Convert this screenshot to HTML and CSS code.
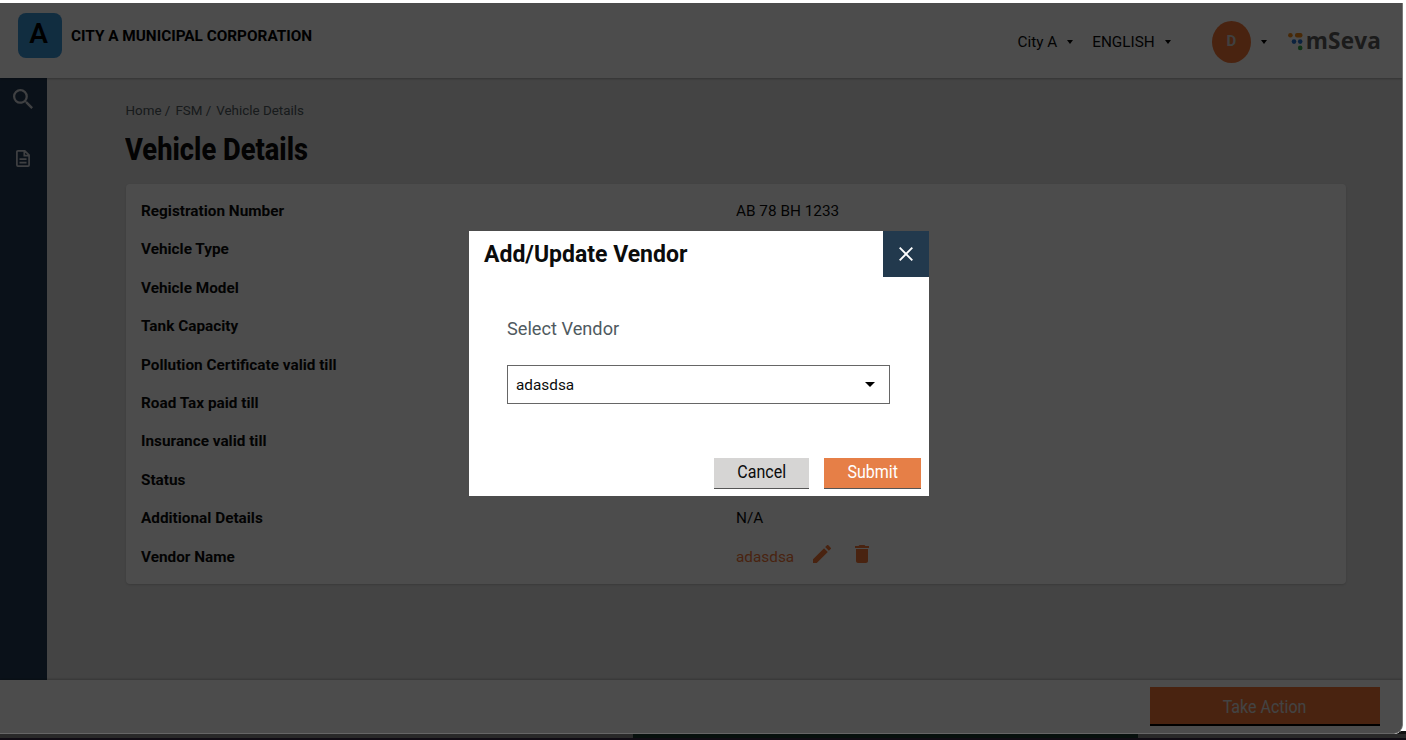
FILE: index.html
```html
<!DOCTYPE html>
<html lang="en">
<head>
<meta charset="utf-8">
<title>Vehicle Details</title>
<link rel="stylesheet" href="styles.css">
</head>
<body>
<div class="window">
  <header class="topbar">
    <div class="brand"><span class="logo">A</span><span class="brand-name">CITY A MUNICIPAL CORPORATION</span></div>
    <div class="tools">
      <span class="city">City A</span><i class="caret"></i>
      <span class="lang">ENGLISH</span><i class="caret"></i>
      <span class="avatar">D</span><i class="caret"></i>
      <svg class="dots" width="15" height="18" viewBox="0 0 15 18"><g fill="#f08a18"><circle cx="2.4" cy="2.3" r="2.3"/><rect x="7" y="0" width="7.500" height="4.600" rx="2"/></g><g fill="#2673d0"><circle cx="6" cy="8.600" r="2.300"/><circle cx="12.200" cy="8.600" r="2.300"/></g><circle cx="12.200" cy="14.900" r="2.300" fill="#35a848"/></svg>
      <span class="mseva">mSeva</span>
    </div>
  </header>
  <div class="body">
    <nav class="sidebar">
      <svg width="20" height="20" viewBox="3 3 17.5 17.5" fill="#fff"><path d="M15.5 14h-.79l-.28-.27A6.47 6.47 0 0 0 16 9.5 6.5 6.5 0 1 0 9.5 16c1.61 0 3.09-.59 4.23-1.57l.27.28v.79l5 4.99L20.49 19l-4.99-5zm-6 0C7.01 14 5 11.99 5 9.5S7.01 5 9.5 5 14 7.01 14 9.5 11.99 14 9.5 14z"/></svg>
      <svg class="doc" width="14" height="17" viewBox="0 0 14 17" fill="none" stroke="#fff" stroke-width="1.700"><path d="M8.800.9H2Q.9.9.9 2V15Q.9 16.100 2 16.100H12Q13.100 16.100 13.100 15V5.200L8.800.9zM8.300 1V5.700H13M3.500 9.200H10.500M3.500 12.600H10.500"/></svg>
    </nav>
    <main class="content">
      <div class="crumbs"><span>Home /</span><span>FSM /</span><span>Vehicle Details</span></div>
      <h1 class="title">Vehicle Details</h1>
      <section class="card">
        <div class="row"><b>Registration Number</b><span>AB 78 BH 1233</span></div>
        <div class="row"><b>Vehicle Type</b></div>
        <div class="row"><b>Vehicle Model</b></div>
        <div class="row"><b>Tank Capacity</b></div>
        <div class="row"><b>Pollution Certificate valid till</b></div>
        <div class="row"><b>Road Tax paid till</b></div>
        <div class="row"><b>Insurance valid till</b></div>
        <div class="row"><b>Status</b></div>
        <div class="row"><b>Additional Details</b><span>N/A</span></div>
        <div class="row"><b>Vendor Name</b><span class="vendor">adasdsa
          <svg class="pencil" width="18" height="18" viewBox="3 3 18 18"><path d="M3 17.250V21h3.750L17.810 9.940l-3.750-3.750L3 17.250zM20.710 7.040a1 1 0 0 0 0-1.410l-2.340-2.340a1 1 0 0 0-1.410 0l-1.830 1.830 3.750 3.750 1.830-1.830z"/></svg>
          <svg class="bin" width="14" height="18" viewBox="5 3 14 18"><path d="M6 19c0 1.100.9 2 2 2h8c1.100 0 2-.9 2-2V7H6v12zM19 4h-3.500l-1-1h-5l-1 1H5v2h14V4z"/></svg></span></div>
      </section>
    </main>
  </div>
  <footer class="actions"><div class="action"><span class="narrow">Take Action</span></div></footer>
  <div class="overlay"></div>
</div>
<div class="edge"><i></i><i></i><i></i></div>
<div class="modal">
  <div class="modal-head"><h2>Add/Update Vendor</h2><span class="close"><svg width="14" height="14" viewBox="0 0 14 14" stroke="#fff" stroke-width="1.900"><path d="M.7.7l12.600 12.600M13.300.7L.7 13.300"/></svg></span></div>
  <div class="modal-body"><label class="label">Select Vendor</label><div class="select"><span>adasdsa</span><i class="caret big"></i></div></div>
  <div class="buttons"><div class="btn cancel"><span class="narrow">Cancel</span></div><div class="btn submit"><span class="narrow">Submit</span></div></div>
</div>
</body>
</html>
```
FILE: styles.css
```css
* { box-sizing: border-box; }
html, body { margin: 0; height: 740px; overflow: hidden; }
body { position: relative; padding-top: 3px; background: #fff; font-family: Roboto, sans-serif; font-size: 15.33px; color: #0b0c0c; }
.window { position: relative; z-index: 1; width: 1403px; height: 731px; display: flex; flex-direction: column; background: #e3e3e3; border-radius: 0 0 9px 0; overflow: hidden; }
.overlay { position: absolute; inset: 0; z-index: 5; background: rgba(0, 0, 0, 0.7); border-right: 1px solid #777; border-bottom: 1px solid #666; border-radius: 0 0 9px 0; }
.topbar { position: relative; z-index: 1; flex: none; height: 75px; display: flex; justify-content: space-between; background: #fff; box-shadow: 0 1px 2px rgba(0, 0, 0, 0.25); }
.brand { display: flex; padding: 10px 0 0 18px; }
.logo { width: 44px; height: 45px; border-radius: 8px; background: #3a96d8; font-weight: 600; font-size: 28px; line-height: 41px; text-align: center; padding-right: 3px; color: #000; }
.brand-name { margin: 14px 0 0 9px; font-weight: 700; font-size: 15.33px; line-height: 18px; color: #000; white-space: nowrap; }
.tools { display: flex; align-items: center; padding: 2px 22px 0 0; white-space: nowrap; }
.caret { width: 0; height: 0; border: 3.5px solid transparent; border-top: 4px solid #000; border-bottom: 0; }
.city { margin-right: 10px; }
.lang { margin: 0 10px 0 19px; }
.avatar { width: 39px; height: 42px; margin: 0 10px 0 41px; border-radius: 50%; background: #f47738; color: #d8d8d8; font: 700 15px/41px Roboto, sans-serif; text-align: center; }
.dots { margin: 0 3px 0 21px; }
.mseva { font: 700 22.6px/26px "Open Sans", sans-serif; color: #5c5c5c; padding-bottom: 2px; letter-spacing: .15px; }
.body { flex: 1; display: flex; min-height: 0; }
.sidebar { width: 47px; background: #243a55; display: flex; flex-direction: column; align-items: center; padding: 11px 1px 0 0; }
.sidebar svg { opacity: .8; }
.doc { margin-top: 41px; }
.content { flex: 1; padding: 25px 57px 0 78.5px; }
.crumbs { display: flex; gap: 5px; font-size: 13.4px; line-height: 16px; color: #505a5f; }
.title { width: max-content; margin: 13px 0 0 -1px; font-size: 31px; line-height: 36px; font-weight: 800; transform: scaleX(.88); transform-origin: left; }
.card { margin-top: 16px; height: 400px; padding: 9.1px 15px; border-radius: 4px; background: #fff; box-shadow: 0 1px 2px rgba(0, 0, 0, .15); }
.row { display: flex; height: 38.4px; line-height: 36px; }
.row b { width: 595px; padding-left: .5px; }
.row > span { padding-left: .5px; }
.vendor { display: flex; color: #f47738; }
.vendor svg { fill: #f47738; margin-top: 6px; }
.pencil { margin-left: 19px; }
.bin { margin-left: 24px; }
.actions { height: 54px; flex: none; display: flex; justify-content: flex-end; padding: 7px 23px 0 0; background: #fff; box-shadow: 0 -1px 2px rgba(0, 0, 0, .2); z-index: 1; }
.action { width: 230px; height: 39px; background: #f47738; border-bottom: 2px solid #000; text-align: center; line-height: 39px; font-size: 18.2px; color: #e0e0e0; }
.narrow { display: inline-block; transform: scaleX(.88); }
.edge { display: grid; grid-template-columns: 633px 505px 1fr; height: 9px; margin-top: -3px; padding-top: 3px; background: #111; border-bottom: 2px solid #100c14; }
.edge i { background: #292929; }
.edge i:nth-child(2) { background: #07100d; }
.modal { position: absolute; z-index: 10; left: 469px; top: 231px; width: 460px; height: 265px; background: #fff; display: flex; flex-direction: column; }
.modal-head { display: flex; justify-content: space-between; padding-left: 15px; height: 46px; }
h2 { margin: 0; font-size: 23px; line-height: 47px; font-weight: 700; }
.close { width: 46px; height: 46px; display: grid; place-items: center; background: #22394d; }
.modal-body { padding: 40px 39px 0 38px; }
.label { display: block; height: 48px; font-size: 18.2px; line-height: 24px; color: #505a5f; }
.select { display: flex; align-items: center; justify-content: space-between; height: 39px; padding: 0 14px 0 8px; border: 1px solid #666; }
.caret.big { border-width: 5px 5px 0; }
.buttons { margin-top: 54px; display: flex; justify-content: flex-end; gap: 15px; padding-right: 8px; }
.btn { height: 31px; width: 95px; text-align: center; font-size: 18.2px; line-height: 28px; border-bottom: 1px solid #555; }
.cancel { background: #d6d5d4; }
.submit { width: 97px; background: #e67f47; color: #fff; }
```
